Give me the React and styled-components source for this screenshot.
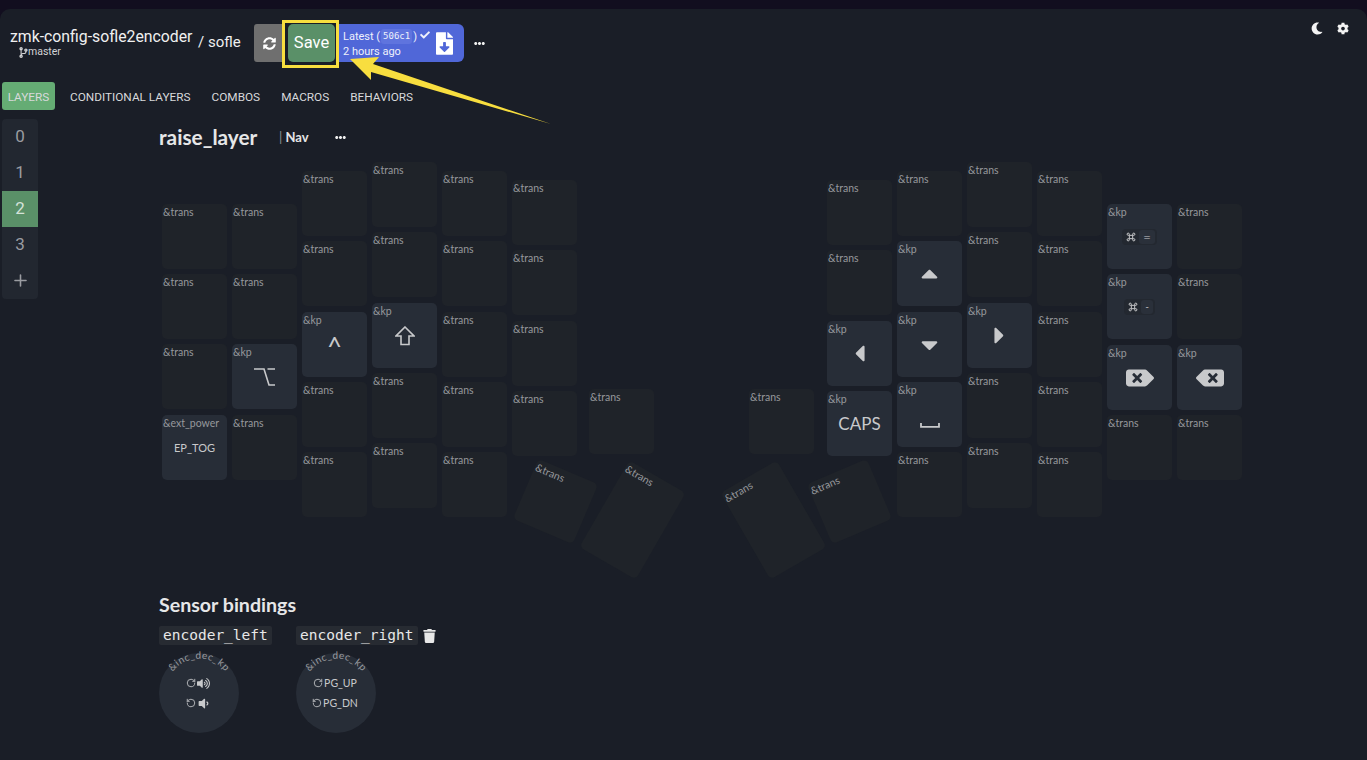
import styled, { createGlobalStyle } from "styled-components";
import {
  FaSyncAlt, FaMoon, FaCog, FaTrash, FaEllipsisH, FaFileDownload, FaCheck,
  FaCaretUp, FaCaretDown, FaCaretLeft, FaCaretRight, FaBackspace,
  FaCodeBranch, FaVolumeUp, FaVolumeDown,
} from "react-icons/fa";
import { LuRotateCw, LuRotateCcw, LuPlus } from "react-icons/lu";

const GlobalStyle = createGlobalStyle`
  html, body { margin: 0; padding: 0; background: #120e1f; }
  * { box-sizing: border-box; }
`;

const Page = styled.div`
  position: relative;
  width: 1367px;
  height: 760px;
  overflow: hidden;
  padding-top: 9px;
  font-family: Roboto, "Liberation Sans", sans-serif;
  color: #f0f0f0;
`;

const Main = styled.div`
  height: 751px;
  background: #1a1e27;
  border-radius: 10px 10px 0 0;
`;

const Header = styled.header`
  display: flex;
  align-items: center;
  height: 68px;
  padding: 0 18px 0 10px;
`;

const RepoBlock = styled.div`
  display: flex;
  flex-direction: column;
  width: 188px;
`;

const RepoName = styled.div`
  font-size: 15.8px;
  line-height: 18px;
  white-space: nowrap;
`;

const Branch = styled.div`
  display: flex;
  align-items: center;
  margin-left: 9px;
  font-size: 10.5px;
  line-height: 12px;
  color: #d2d3d5;
  svg { width: 9px; height: 11px; }
`;

const Keymap = styled.div`
  width: 56px;
  font-size: 15px;
  margin-top: -2px;
  white-space: nowrap;
`;

const SyncButton = styled.button`
  display: flex;
  align-items: center;
  justify-content: center;
  width: 30px;
  height: 38px;
  padding: 0;
  border: 0;
  border-radius: 3px 0 0 3px;
  background: #6f6f6f;
  color: #fff;
  svg { width: 13px; height: 13px; }
`;

const SaveButton = styled.button`
  width: 47px;
  height: 38px;
  margin-left: 4px;
  padding: 0 0 2px;
  border: 0;
  border-radius: 5px;
  background: #5a9068;
  color: #fff;
  font-family: Roboto, sans-serif;
  font-size: 16.5px;
`;

const BuildBadge = styled.div`
  display: flex;
  align-items: center;
  width: 125px;
  height: 38px;
  margin-left: 4px;
  padding-left: 4px;
  border-radius: 0 6px 6px 0;
  background: #5067d8;
  font-size: 11px;
  line-height: 15px;
  color: #eef0fb;
`;

const BuildText = styled.div`
  width: 93px;
  padding-top: 1px;
  white-space: nowrap;
`;

const CommitLine = styled.div`
  display: flex;
  align-items: center;
  svg { width: 10px; height: 10px; margin-left: 3px; margin-top: -3px; }
`;

const Sha = styled.code`
  margin: 0 1px;
  padding: 0 2px;
  border-radius: 3px;
  background: #5f74de;
  font-family: "DejaVu Sans Mono", monospace;
  font-size: 9px;
`;

const DownloadIcon = styled(FaFileDownload)`
  width: 17px;
  height: 23px;
  color: #fff;
`;

const MoreIcon = styled(FaEllipsisH)`
  width: 11px;
  height: 11px;
  color: #f0f0f0;
  margin-left: ${(p) => p.$left || "0"};
`;

const ThemeTools = styled.div`
  display: flex;
  gap: 14px;
  margin-left: auto;
  margin-top: -30px;
  color: #f3f3f3;
  svg { width: 12px; height: 13px; }
`;

const Tabs = styled.nav`
  display: flex;
  gap: 5px;
  height: 28px;
  margin: 5px 0 0 2px;
`;

const Tab = styled.div`
  display: flex;
  align-items: center;
  justify-content: center;
  min-width: ${(p) => (p.$active ? "53px" : "0")};
  padding: 1px ${(p) => (p.$active ? "5px" : "8px")} 0;
  margin-right: ${(p) => (p.$active ? "2px" : "0")};
  border-radius: 3px;
  background: ${(p) => (p.$active ? "#65ac74" : "transparent")};
  color: #d8d9db;
  font-size: 11.8px;
  white-space: nowrap;
`;

const Body = styled.div`
  display: flex;
  margin-top: 9px;
`;

const Sidebar = styled.div`
  flex: none;
  width: 36px;
  height: 180px;
  margin-left: 2px;
  border-radius: 4px;
  overflow: hidden;
  background: #222730;
`;

const LayerItem = styled.div`
  display: flex;
  align-items: center;
  justify-content: center;
  height: 36px;
  padding-bottom: 2px;
  background: ${(p) => (p.$active ? "#5a9068" : "transparent")};
  color: ${(p) => (p.$active ? "#d4e2d8" : "#9a9ca1")};
  font-size: 17px;
  svg { width: 19px; height: 19px; }
`;

const Content = styled.div`
  padding-left: 121px;
`;

const TitleRow = styled.div`
  display: flex;
  align-items: center;
  height: 36px;
`;

const LayerName = styled.h2`
  margin: -2px 0 0;
  width: 120px;
  font-family: Lato, sans-serif;
  font-size: 20.8px;
  font-weight: 700;
  color: #e6e7e8;
`;

const LayerTag = styled.div`
  width: 56px;
  font-family: Lato, sans-serif;
  font-size: 13px;
  font-weight: 700;
  color: #e4e5e6;
  span { font-weight: 400; color: #8f9196; }
`;

const Keyboard = styled.div`
  position: relative;
  width: 1090px;
  height: 430px;
`;

const KeyCap = styled.div`
  position: absolute;
  width: 65px;
  border-radius: 5px;
  background: ${(p) => (p.$bound ? "#272d37" : "#1f2329")};
`;

const KeyLabel = styled.div`
  position: absolute;
  top: 2px;
  left: 1px;
  font-family: Lato, sans-serif;
  font-size: 10.5px;
  line-height: 12px;
  color: #96989c;
`;

const KeyValue = styled.div`
  display: flex;
  align-items: center;
  justify-content: center;
  width: 100%;
  height: 100%;
  padding-top: ${(p) => p.$nudge || "0"};
  color: #c8c9cb;
  font-family: Lato, sans-serif;
  font-size: ${(p) => p.$size || "17px"};
`;

const ModKeys = styled.div`
  display: flex;
  align-items: center;
  padding: 1px 2px;
  border-radius: 4px;
  background: #232830;
  font-family: "DejaVu Sans", sans-serif;
  font-size: 9px;
  color: #c8c9cb;
`;

const CommandIcon = styled.svg`
  width: 10px;
  height: 10px;
  margin: 0 3px 0 2px;
`;

const ModKey = styled.span`
  padding: 2px 4px;
  border-radius: 3px;
  background: #2a303a;
`;

const FlipBack = styled(FaBackspace)`
  transform: scaleX(-1);
`;

const SensorTitle = styled.h3`
  margin: 9px 0 0;
  font-family: Lato, sans-serif;
  font-size: 19.6px;
  line-height: 22px;
  font-weight: 700;
  color: #e6e7e8;
`;

const Encoders = styled.div`
  display: flex;
  margin-top: 10px;
`;

const Encoder = styled.div`
  width: 137px;
`;

const EncoderHead = styled.div`
  display: flex;
  align-items: center;
  gap: 5px;
  width: 160px;
`;

const EncoderName = styled.code`
  display: block;
  height: 19px;
  padding: 0 4px;
  border-radius: 2px;
  background: #272b32;
  font-family: "DejaVu Sans Mono", monospace;
  font-size: 14.5px;
  line-height: 19px;
  color: #e8e8e8;
  white-space: nowrap;
`;

const TrashIcon = styled(FaTrash)`
  width: 13px;
  height: 14px;
  color: #e8e8e8;
`;

const Dial = styled.div`
  position: relative;
  display: flex;
  flex-direction: column;
  align-items: center;
  justify-content: center;
  gap: 7px;
  width: 80px;
  height: 80px;
  margin-top: 8px;
  border-radius: 50%;
  background: #272d37;
`;

const DialArc = styled.svg`
  position: absolute;
  top: 0;
  left: 0;
  width: 80px;
  height: 80px;
  overflow: visible;
`;

const ArcText = styled.text`
  font-family: Lato, sans-serif;
  font-size: 10px;
  letter-spacing: 0.5px;
  fill: #9a9ca0;
`;

const DialRow = styled.div`
  display: flex;
  align-items: center;
  gap: 1px;
  height: 13px;
  margin-left: -2px;
  font-family: Lato, sans-serif;
  font-size: 10.5px;
  color: #c8c9cb;
  svg { width: 10px; height: 10px; }
  svg + svg { width: 13px; height: 13px; }
`;

const Highlight = styled.div`
  position: absolute;
  top: 20px;
  left: 282px;
  width: 57px;
  height: 48px;
  border: 3px solid #f8de3f;
  pointer-events: none;
`;

const Arrow = styled.svg`
  position: absolute;
  top: 0;
  left: 0;
  pointer-events: none;
`;

const ORIGIN_X = 159;
const ORIGIN_Y = 155;

const trans = (x, y) => ({ x, y, label: "&trans" });
const kp = (x, y, value) => ({ x, y, label: "&kp", value });

const Command = () => (
  <CommandIcon viewBox="0 0 9 9">
    <path
      d="M3 3H6V6H3ZM3 3V2A1 1 0 1 0 2 3H3M6 3H7A1 1 0 1 0 6 2V3M6 6V7A1 1 0 1 0 7 6H6M3 6H2A1 1 0 1 0 3 7V6"
      fill="none"
      stroke="#c8c9cb"
      strokeWidth="0.9"
    />
  </CommandIcon>
);

const keys = [
  // left hand
  trans(162, 204), trans(162, 274), trans(162, 344),
  { x: 162, y: 415, label: "&ext_power", value: <KeyValue $size="11px">EP_TOG</KeyValue> },
  trans(232, 204), trans(232, 274),
  kp(232, 344, (
    <KeyValue>
      <svg width="21" height="18" viewBox="0 0 21 18">
        <path d="M0 1H10L15 17H21M13.5 1H21" fill="none" stroke="#c8c9cb" strokeWidth="1.6" />
      </svg>
    </KeyValue>
  )),
  trans(232, 415),
  trans(302, 171), trans(302, 241),
  kp(302, 312, <KeyValue $size="26px" $nudge="2px">^</KeyValue>),
  trans(302, 382), trans(302, 452),
  trans(372, 162), trans(372, 232),
  kp(372, 303, (
    <KeyValue>
      <svg width="20" height="20" viewBox="0 0 20 20">
        <path d="M10 1L19 10H14V18.5H6V10H1Z" fill="none" stroke="#c8c9cb" strokeWidth="1.6" />
      </svg>
    </KeyValue>
  )),
  trans(372, 373), trans(372, 443),
  trans(442, 171), trans(442, 241), trans(442, 312), trans(442, 382), trans(442, 452),
  trans(512, 180), trans(512, 250), trans(512, 321), trans(512, 391),
  trans(589, 389),
  // right hand
  trans(749, 389),
  trans(827, 180), trans(827, 250),
  kp(827, 321, <KeyValue $size="27px"><FaCaretLeft /></KeyValue>),
  kp(827, 391, <KeyValue $size="17px">CAPS</KeyValue>),
  trans(897, 171),
  kp(897, 241, <KeyValue $size="27px"><FaCaretUp /></KeyValue>),
  kp(897, 312, <KeyValue $size="27px"><FaCaretDown /></KeyValue>),
  kp(897, 382, (
    <KeyValue $nudge="22px">
      <svg width="20" height="5" viewBox="0 0 20 5"><path d="M1 0v3.8h18V0" fill="none" stroke="#c8c9cb" strokeWidth="1.8" /></svg>
    </KeyValue>
  )),
  trans(897, 452),
  trans(967, 162), trans(967, 232),
  kp(967, 303, <KeyValue $size="27px"><FaCaretRight /></KeyValue>),
  trans(967, 373), trans(967, 443),
  trans(1037, 171), trans(1037, 241), trans(1037, 312), trans(1037, 382), trans(1037, 452),
  kp(1107, 204, <KeyValue><ModKeys><Command /><ModKey>=</ModKey></ModKeys></KeyValue>),
  kp(1107, 274, <KeyValue><ModKeys><Command /><ModKey>-</ModKey></ModKeys></KeyValue>),
  kp(1107, 345, <KeyValue $size="28px"><FlipBack /></KeyValue>),
  trans(1107, 415),
  trans(1177, 204), trans(1177, 274),
  kp(1177, 345, <KeyValue $size="28px"><FaBackspace /></KeyValue>),
  trans(1177, 415),
];

// thumb keys: centre point, height and tilt
const tiltedKeys = [
  { cx: 555, cy: 501, h: 65, angle: 23 },
  { cx: 632, cy: 519.5, h: 100, angle: 30 },
  { cx: 773, cy: 519.5, h: 100, angle: -30 },
  { cx: 849, cy: 501, h: 65, angle: -23 },
];

function Key({ item }) {
  return (
    <KeyCap
      $bound={!!item.value}
      style={{ left: item.x - ORIGIN_X, top: item.y - ORIGIN_Y, height: 65 }}
    >
      <KeyLabel>{item.label}</KeyLabel>
      {item.value}
    </KeyCap>
  );
}

function TiltedKey({ item }) {
  return (
    <KeyCap
      style={{
        left: item.cx - 32.5 - ORIGIN_X,
        top: item.cy - item.h / 2 - ORIGIN_Y,
        height: item.h,
        transform: `rotate(${item.angle}deg)`,
      }}
    >
      <KeyLabel>&amp;trans</KeyLabel>
    </KeyCap>
  );
}

function EncoderDial({ id, up, down }) {
  return (
    <Dial>
      <DialArc viewBox="0 0 80 80">
        <defs>
          <path id={id} d="M9.5 26 A33 33 0 0 1 70.5 26" />
        </defs>
        <ArcText>
          <textPath href={`#${id}`} startOffset="50%" textAnchor="middle">&amp;inc_dec_kp</textPath>
        </ArcText>
      </DialArc>
      <DialRow><LuRotateCw />{up}</DialRow>
      <DialRow><LuRotateCcw />{down}</DialRow>
    </Dial>
  );
}

export default function App() {
  return (
    <Page>
      <GlobalStyle />
      <Main>
        <Header>
          <RepoBlock>
            <RepoName>zmk-config-sofle2encoder</RepoName>
            <Branch><FaCodeBranch />master</Branch>
          </RepoBlock>
          <Keymap>/ sofle</Keymap>
          <SyncButton><FaSyncAlt /></SyncButton>
          <SaveButton>Save</SaveButton>
          <BuildBadge>
            <BuildText>
              <CommitLine>Latest (<Sha>506c1</Sha>)<FaCheck /></CommitLine>
              <div>2 hours ago</div>
            </BuildText>
            <DownloadIcon />
          </BuildBadge>
          <MoreIcon $left="10px" />
          <ThemeTools><FaMoon /><FaCog /></ThemeTools>
        </Header>

        <Tabs>
          <Tab $active>LAYERS</Tab>
          <Tab>CONDITIONAL LAYERS</Tab>
          <Tab>COMBOS</Tab>
          <Tab>MACROS</Tab>
          <Tab>BEHAVIORS</Tab>
        </Tabs>

        <Body>
          <Sidebar>
            <LayerItem>0</LayerItem>
            <LayerItem>1</LayerItem>
            <LayerItem $active>2</LayerItem>
            <LayerItem>3</LayerItem>
            <LayerItem><LuPlus /></LayerItem>
          </Sidebar>
          <Content>
            <TitleRow>
              <LayerName>raise_layer</LayerName>
              <LayerTag><span>|</span> Nav</LayerTag>
              <MoreIcon />
            </TitleRow>
            <Keyboard>
              {keys.map((item) => <Key key={`${item.x}-${item.y}`} item={item} />)}
              {tiltedKeys.map((item) => <TiltedKey key={item.cx} item={item} />)}
            </Keyboard>
            <SensorTitle>Sensor bindings</SensorTitle>
            <Encoders>
              <Encoder>
                <EncoderHead><EncoderName>encoder_left</EncoderName></EncoderHead>
                <EncoderDial id="arc-left" up={<FaVolumeUp />} down={<FaVolumeDown />} />
              </Encoder>
              <Encoder>
                <EncoderHead><EncoderName>encoder_right</EncoderName><TrashIcon /></EncoderHead>
                <EncoderDial id="arc-right" up="PG_UP" down="PG_DN" />
              </Encoder>
            </Encoders>
          </Content>
        </Body>
      </Main>

      <Highlight />
      <Arrow width="1367" height="760" viewBox="0 0 1367 760">
        <path d="M350 59 L379 57 L373 64 L551 124 L371 72 L371 80 Z" fill="#f8de3f" />
      </Arrow>
    </Page>
  );
}
